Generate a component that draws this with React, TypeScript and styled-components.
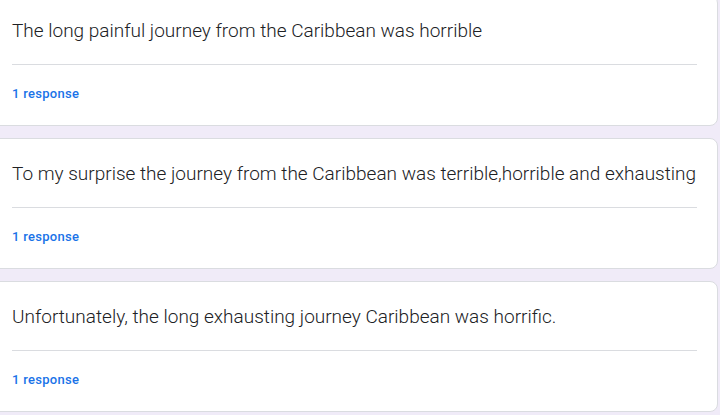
import React from 'react';
import styled, { createGlobalStyle } from 'styled-components';

const GlobalStyle = createGlobalStyle`
  html, body {
    margin: 0;
    padding: 0;
    background: #f0ebf8;
    overflow: hidden;
  }
  body {
    font-family: Roboto, "Noto Sans", Arial, sans-serif;
  }
`;

const List = styled.div`
  display: flex;
  flex-direction: column;
  gap: 12px;
  margin-top: -5px;
  margin-left: -12px;
  width: 730px;
`;

const Card = styled.div`
  background: #fff;
  border: 1px solid #dadce0;
  border-radius: 8px;
  box-sizing: border-box;
  height: 131px;
  padding: 23px 20px 0 23px;
`;

const AnswerText = styled.div`
  color: #202124;
  font-size: 19px;
  font-weight: 300;
  line-height: 24px;
  white-space: nowrap;
`;

const Divider = styled.hr`
  border: none;
  border-top: 1px solid #dadce0;
  margin: 21px 0 0;
`;

const ResponseCount = styled.div`
  color: #1a73e8;
  font-size: 13px;
  font-weight: 500;
  line-height: 16px;
  margin-top: 21px;
  letter-spacing: 0.3px;
`;

const answers = [
  'The long painful journey from the Caribbean was horrible',
  'To my surprise the journey from the Caribbean was terrible,horrible and exhausting',
  'Unfortunately, the long exhausting journey Caribbean was horrific.',
];

export default function App() {
  return (
    <>
      <GlobalStyle />
      <List>
        {answers.map((a) => (
          <Card key={a}>
            <AnswerText>{a}</AnswerText>
            <Divider />
            <ResponseCount>1 response</ResponseCount>
          </Card>
        ))}
      </List>
    </>
  );
}
